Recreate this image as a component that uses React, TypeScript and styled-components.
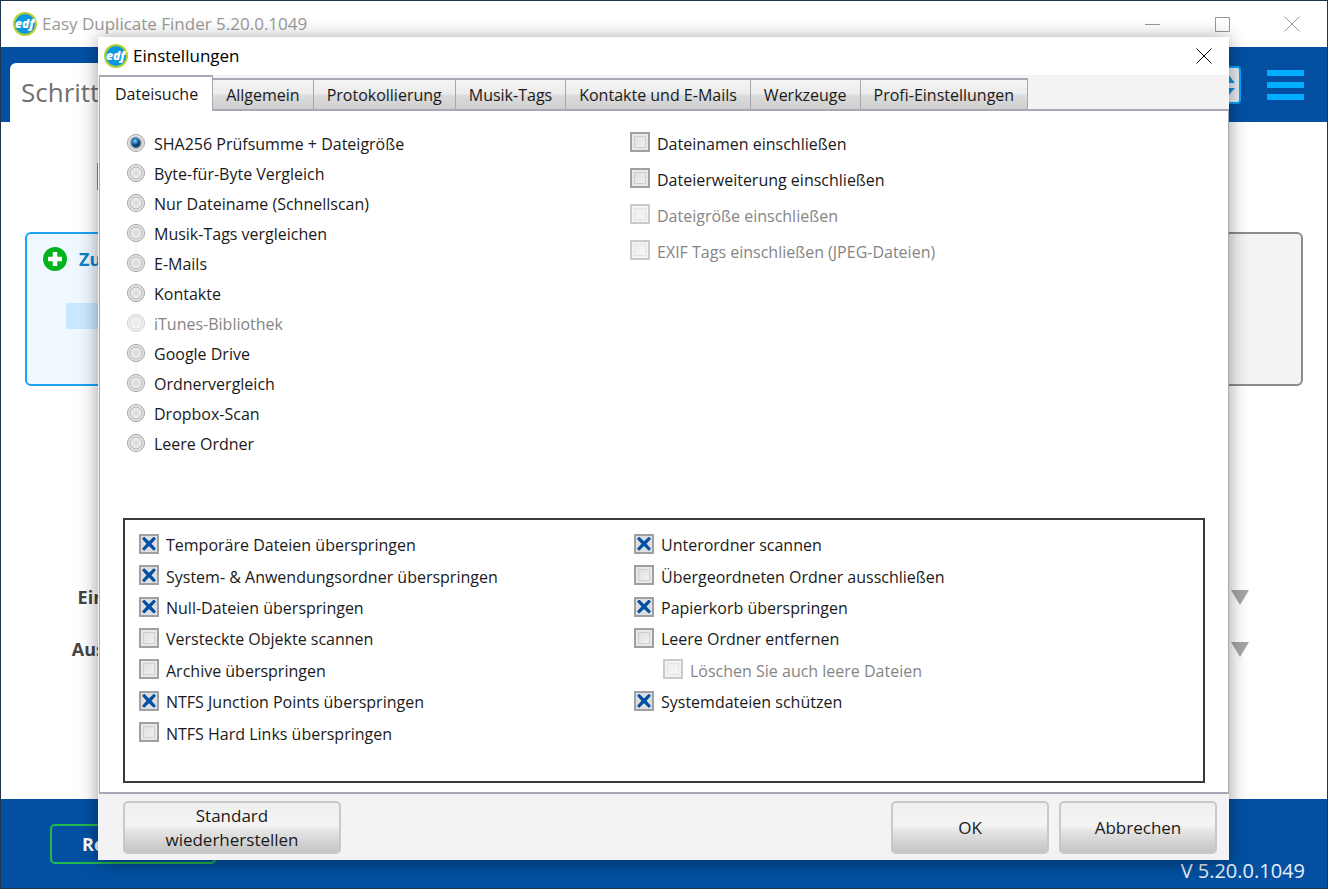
import React, { useState } from "react";
import styled, { createGlobalStyle } from "styled-components";

const GlobalStyle = createGlobalStyle`
  *, *::before, *::after { box-sizing: border-box; }
  body {
    margin: 0;
    font-family: "Open Sans", "Noto Sans", sans-serif;
    font-size: 16px;
    color: #1a1a1a;
  }
  button { font: inherit; color: inherit; cursor: pointer; }
  h1, h2, p { margin: 0; font-weight: 400; }
`;

const BLUE = "#0350a2";
const LINE = "#a6a9b2";

/* ---------- main window ---------- */

const Window = styled.div`
  position: relative;
  display: flex;
  flex-direction: column;
  min-height: 100vh;
  border: 1px solid #22344b;
  background: #fff;
`;

const TitleBar = styled.header`
  display: flex;
  align-items: center;
  height: 46px;
  padding-left: 12px;
  gap: 5px;
`;

const AppTitle = styled.h1`
  flex: 1;
  font-size: 17px;
  line-height: 24px;
  color: #999;
`;

const CaptionButtons = styled.div`
  display: flex;
  align-self: stretch;
`;

const CaptionButton = styled.button<{ $dark?: boolean }>`
  display: flex;
  align-items: center;
  justify-content: center;
  width: ${(p) => (p.$dark ? 50 : 70)}px;
  padding: 0;
  border: 0;
  background: none;
  color: ${(p) => (p.$dark ? "#000" : "#999")};
`;

const Banner = styled.div`
  display: flex;
  align-items: flex-end;
  height: 75px;
  padding: 0 23px 0 9px;
  background: ${BLUE};
`;

const StepTab = styled.div`
  flex: 1;
  max-width: 300px;
  height: 59px;
  padding: 11px;
  border-radius: 6px 6px 0 0;
  background: #fff;
  font-size: 26px;
  line-height: 36px;
  color: #707070;
`;

const BannerTools = styled.div`
  display: flex;
  align-items: center;
  gap: 26px;
  margin-left: auto;
  padding-bottom: 18px;
`;

const Stepper = styled.button`
  display: flex;
  align-items: center;
  justify-content: flex-end;
  width: 60px;
  height: 38px;
  padding: 0 3px;
  border: 2px solid #00a8ff;
  border-radius: 4px;
  background: #e8edf3;
`;

const MenuButton = styled.button`
  display: flex;
  padding: 0;
  border: 0;
  background: none;
`;

const Workspace = styled.main`
  flex: 1;
  display: flex;
  flex-direction: column;
  padding: 41px 24px 0;
`;

const Accent = styled.div`
  width: 160px;
  height: 27px;
  margin: 0 0 42px 72px;
  background: #3fa4f0;
`;

const Cards = styled.div`
  display: grid;
  grid-template-columns: 1fr 1fr;
  gap: 40px;
`;

const Card = styled.section<{ $active?: boolean }>`
  height: 154px;
  padding: 13px 16px;
  border: 2px solid ${(p) => (p.$active ? "#1ba4f7" : "#8c8c8c")};
  border-radius: 6px;
  background: ${(p) => (p.$active ? "#eff8ff" : "#f3f3f3")};
`;

const CardTitle = styled.h2`
  display: flex;
  align-items: center;
  gap: 12px;
  font-size: 18px;
  font-weight: 700;
  line-height: 24px;
  color: #0d7fc4;
`;

const CardBar = styled.div`
  height: 26px;
  margin: 32px 23px 0;
  background: #cce8ff;
`;

const FilterRows = styled.div`
  display: grid;
  gap: 28px;
  margin-top: 199px;
  padding: 0 54px 0 0;
`;

const FilterRow = styled.div`
  display: flex;
  align-items: center;
  justify-content: space-between;
  font-size: 18px;
  font-weight: 700;
  line-height: 24px;
  color: #444;
`;

const FilterLabel = styled.span`
  width: 80px;
  text-align: right;
`;

const BottomBar = styled.footer`
  display: flex;
  align-items: flex-start;
  justify-content: space-between;
  height: 89px;
  padding: 25px 22px 0 49px;
  background: ${BLUE};
  color: #fff;
`;

const RegisterButton = styled.button`
  width: 166px;
  height: 40px;
  padding: 0 30px;
  border: 2px solid #22b84a;
  border-radius: 5px;
  background: none;
  color: #fff;
  font-size: 18px;
  font-weight: 700;
  text-align: left;
`;

const Version = styled.p`
  padding-top: 35px;
  font-size: 20px;
  line-height: 24px;
  color: #e6eef6;
`;

/* ---------- settings dialog ---------- */

const Dialog = styled.div`
  position: absolute;
  inset: 36px 98px 28px 97px;
  display: flex;
  flex-direction: column;
  background: #f3f3f3;
  box-shadow: 0 2px 18px rgba(0, 0, 0, 0.4);
`;

const DialogTitleBar = styled.header`
  display: flex;
  align-items: center;
  height: 38px;
  padding-left: 6px;
  gap: 5px;
  background: #fff;
  color: #000;
`;

const DialogTitle = styled.h2`
  flex: 1;
  font-size: 17px;
  line-height: 24px;
`;

const TabStrip = styled.div`
  display: flex;
  align-items: flex-end;
  height: 36px;
  padding-left: 1px;
`;

const Tab = styled.button<{ $active?: boolean }>`
  position: relative;
  z-index: 1;
  height: ${(p) => (p.$active ? 36 : 33)}px;
  padding: ${(p) => (p.$active ? "0 14px 0 15px" : "0 13px")};
  border: solid ${LINE};
  border-width: ${(p) => (p.$active ? "2px 1px 0" : "2px 1px 2px 0")};
  background: ${(p) =>
    p.$active ? "#fff" : "linear-gradient(#f4f4f4 0%, #ececec 48%, #dcdcdc 52%, #cfcfcf 100%)"};
  white-space: nowrap;
`;

const TabPanel = styled.div`
  flex: 1;
  display: flex;
  flex-direction: column;
  margin: -2px 0 0 1px;
  padding: 13px 23px 9px;
  border: solid ${LINE};
  border-width: 2px 1px;
  background: #fff;
`;

const SearchOptions = styled.div`
  flex: 1;
  display: grid;
  grid-template-columns: 503px 1fr;
  align-items: start;
  padding-left: 4px;
`;

const OptionList = styled.div<{ $row: number; $top?: number }>`
  display: grid;
  grid-auto-rows: ${(p) => p.$row}px;
  padding-top: ${(p) => p.$top ?? 0}px;
`;

const ScanOptions = styled.div`
  display: grid;
  grid-template-columns: 495px 1fr;
  height: 265px;
  padding: 8px 14px 33px;
  border: 2px solid #3a3a3a;
`;

const ScanColumn = styled.div`
  display: grid;
  grid-template-rows: repeat(7, 1fr);
`;

const Option = styled.label<{ $disabled?: boolean; $indent?: boolean }>`
  display: flex;
  align-items: center;
  gap: 7px;
  margin-left: ${(p) => (p.$indent ? 29 : 0)}px;
  color: ${(p) => (p.$disabled ? "#858585" : "inherit")};
  white-space: nowrap;
`;

const Check = styled.input.attrs({ type: "checkbox" })`
  appearance: none;
  display: grid;
  place-items: center;
  flex: none;
  width: 20px;
  height: 20px;
  margin: 0;
  border: 2px solid #a0a0a0;
  background: linear-gradient(135deg, #dadada, #f6f6f6);
  box-shadow: inset 0 0 0 2px #e8e8e8, inset 0 0 0 3px #cfcfcf;

  &:checked {
    background: #dcdee1;
    box-shadow: none;
  }
  &:checked::before {
    content: "";
    width: 14px;
    height: 14px;
    background: ${BLUE};
    clip-path: polygon(
      0 14%, 16% 0, 50% 33%, 84% 0, 100% 14%, 68% 50%,
      100% 86%, 84% 100%, 50% 67%, 16% 100%, 0 86%, 32% 50%
    );
  }
  &:disabled { opacity: 0.55; }
`;

const Radio = styled.input.attrs({ type: "radio" })`
  appearance: none;
  flex: none;
  width: 18px;
  height: 18px;
  margin: 0 2px 0 0;
  border: 1px solid #a0a0a0;
  border-radius: 50%;
  background: radial-gradient(circle at 8px 8px, #d2d8dc 0, #ececec 5px, #b4b4b4 6px, #ececec 7px);

  &:checked {
    background:
      radial-gradient(circle at 7px 6px, #8fd0f5 0, #1a6cb4 3px, rgba(26, 108, 180, 0) 4px),
      radial-gradient(circle at 8px 8px, #0b3f75 0, #0b3f75 4px, #a9b4bf 5px, #b4b4b4 6px, #ececec 7px);
  }
  &:disabled { opacity: 0.5; }
`;

const OptionText = styled.span`
  padding-top: 3px;
  line-height: 22px;

  ${Radio} + & { padding-top: 1px; }
`;

const DialogFooter = styled.footer`
  display: flex;
  gap: 10px;
  height: 66px;
  padding: 7px 12px 6px 25px;
`;

const PushButton = styled.button<{ $width: number; $first?: boolean }>`
  width: ${(p) => p.$width}px;
  margin-right: ${(p) => (p.$first ? "auto" : "0")};
  padding: 0 30px;
  border: 2px solid #c8c8c8;
  border-radius: 5px;
  background: linear-gradient(#efefef 0%, #f4f4f4 45%, #e4e4e4 58%, #c4c4c4 100%);
  font-size: 17px;
  line-height: 24px;
`;

/* ---------- drawings ---------- */

const Logo = () => (
  <svg width="24" height="24" viewBox="0 0 24 24" aria-hidden="true">
    <circle cx="12" cy="12" r="12" fill="#b4cf34" />
    <circle cx="12" cy="12" r="10" fill="#0a97df" />
    <text
      x="11.5"
      y="16"
      textAnchor="middle"
      fontFamily="Open Sans, sans-serif"
      fontSize="12"
      fontWeight="800"
      fontStyle="italic"
      fill="#fff"
    >
      edf
    </text>
  </svg>
);

const CloseIcon = () => (
  <svg width="16" height="16" viewBox="0 0 16 16" stroke="currentColor" aria-hidden="true">
    <path d="M.5.5l15 15M15.5.5l-15 15" />
  </svg>
);

const MinimizeIcon = () => (
  <svg width="15" height="15" viewBox="0 0 15 15" stroke="currentColor" aria-hidden="true">
    <path d="M0 7.5h15" />
  </svg>
);

const MaximizeIcon = () => (
  <svg width="15" height="15" viewBox="0 0 15 15" fill="none" stroke="currentColor" aria-hidden="true">
    <path d="M.5.5h14v14H.5z" />
  </svg>
);

const StepperArrows = () => (
  <svg width="16" height="22" viewBox="0 0 16 22" fill="#0a97e8" aria-hidden="true">
    <path d="M8 0l7 9H1zM8 22l7-8H1z" />
  </svg>
);

const MenuIcon = () => (
  <svg width="37" height="30" viewBox="0 0 37 30" fill="#00aeff" aria-hidden="true">
    <path d="M0 0h37v6H0zM0 12h37v6H0zM0 24h37v6H0z" />
  </svg>
);

const PlusIcon = () => (
  <svg width="24" height="24" viewBox="0 0 24 24" aria-hidden="true">
    <circle cx="12" cy="12" r="12" fill="#00b51c" />
    <path d="M12 5v14M5 12h14" stroke="#fff" strokeWidth="4.5" />
  </svg>
);

const DropArrow = () => (
  <svg width="18" height="15" viewBox="0 0 18 15" fill="#a6a6a6" aria-hidden="true">
    <path d="M0 0h18L9 15z" />
  </svg>
);

/* ---------- data ---------- */

type Item = { label: string; checked?: boolean; disabled?: boolean; indent?: boolean };

const TABS = [
  "Dateisuche",
  "Allgemein",
  "Protokollierung",
  "Musik-Tags",
  "Kontakte und E-Mails",
  "Werkzeuge",
  "Profi-Einstellungen",
];

const MODES: Item[] = [
  { label: "SHA256 Prüfsumme + Dateigröße" },
  { label: "Byte-für-Byte Vergleich" },
  { label: "Nur Dateiname (Schnellscan)" },
  { label: "Musik-Tags vergleichen" },
  { label: "E-Mails" },
  { label: "Kontakte" },
  { label: "iTunes-Bibliothek", disabled: true },
  { label: "Google Drive" },
  { label: "Ordnervergleich" },
  { label: "Dropbox-Scan" },
  { label: "Leere Ordner" },
];

const INCLUDES: Item[] = [
  { label: "Dateinamen einschließen" },
  { label: "Dateierweiterung einschließen" },
  { label: "Dateigröße einschließen", disabled: true },
  { label: "EXIF Tags einschließen (JPEG-Dateien)", disabled: true },
];

const SCAN_LEFT: Item[] = [
  { label: "Temporäre Dateien überspringen", checked: true },
  { label: "System- & Anwendungsordner überspringen", checked: true },
  { label: "Null-Dateien überspringen", checked: true },
  { label: "Versteckte Objekte scannen" },
  { label: "Archive überspringen" },
  { label: "NTFS Junction Points überspringen", checked: true },
  { label: "NTFS Hard Links überspringen" },
];

const SCAN_RIGHT: Item[] = [
  { label: "Unterordner scannen", checked: true },
  { label: "Übergeordneten Ordner ausschließen" },
  { label: "Papierkorb überspringen", checked: true },
  { label: "Leere Ordner entfernen" },
  { label: "Löschen Sie auch leere Dateien", disabled: true, indent: true },
  { label: "Systemdateien schützen", checked: true },
];

const CheckOption = ({ item }: { item: Item }) => (
  <Option $disabled={item.disabled} $indent={item.indent}>
    <Check defaultChecked={item.checked} disabled={item.disabled} />
    <OptionText>{item.label}</OptionText>
  </Option>
);

function SettingsDialog() {
  const [mode, setMode] = useState(MODES[0].label);
  const [tab, setTab] = useState(TABS[0]);

  return (
    <Dialog role="dialog" aria-labelledby="settings-title">
      <DialogTitleBar>
        <Logo />
        <DialogTitle id="settings-title">Einstellungen</DialogTitle>
        <CaptionButton $dark aria-label="Schließen">
          <CloseIcon />
        </CaptionButton>
      </DialogTitleBar>
      <TabStrip role="tablist">
        {TABS.map((name) => (
          <Tab
            key={name}
            role="tab"
            aria-selected={name === tab}
            $active={name === tab}
            onClick={() => setTab(name)}
          >
            {name}
          </Tab>
        ))}
      </TabStrip>
      <TabPanel role="tabpanel">
        <SearchOptions>
          <OptionList $row={30} $top={4}>
            {MODES.map((item) => (
              <Option key={item.label} $disabled={item.disabled}>
                <Radio
                  name="mode"
                  checked={mode === item.label}
                  disabled={item.disabled}
                  onChange={() => setMode(item.label)}
                />
                <OptionText>{item.label}</OptionText>
              </Option>
            ))}
          </OptionList>
          <OptionList $row={36}>
            {INCLUDES.map((item) => (
              <CheckOption key={item.label} item={item} />
            ))}
          </OptionList>
        </SearchOptions>
        <ScanOptions>
          <ScanColumn>
            {SCAN_LEFT.map((item) => (
              <CheckOption key={item.label} item={item} />
            ))}
          </ScanColumn>
          <ScanColumn>
            {SCAN_RIGHT.map((item) => (
              <CheckOption key={item.label} item={item} />
            ))}
          </ScanColumn>
        </ScanOptions>
      </TabPanel>
      <DialogFooter>
        <PushButton $width={218} $first>
          Standard wiederherstellen
        </PushButton>
        <PushButton $width={158}>OK</PushButton>
        <PushButton $width={158}>Abbrechen</PushButton>
      </DialogFooter>
    </Dialog>
  );
}

export default function App() {
  return (
    <>
      <GlobalStyle />
      <Window>
        <TitleBar>
          <Logo />
          <AppTitle>Easy Duplicate Finder 5.20.0.1049</AppTitle>
          <CaptionButtons>
            <CaptionButton aria-label="Minimieren">
              <MinimizeIcon />
            </CaptionButton>
            <CaptionButton aria-label="Maximieren">
              <MaximizeIcon />
            </CaptionButton>
            <CaptionButton aria-label="Beenden">
              <CloseIcon />
            </CaptionButton>
          </CaptionButtons>
        </TitleBar>
        <Banner>
          <StepTab>Schritt</StepTab>
          <BannerTools>
            <Stepper aria-label="Auswahl">
              <StepperArrows />
            </Stepper>
            <MenuButton aria-label="Menü">
              <MenuIcon />
            </MenuButton>
          </BannerTools>
        </Banner>
        <Workspace>
          <Accent />
          <Cards>
            <Card $active>
              <CardTitle>
                <PlusIcon />
                Zu
              </CardTitle>
              <CardBar />
            </Card>
            <Card />
          </Cards>
          <FilterRows>
            <FilterRow>
              <FilterLabel>Ein</FilterLabel>
              <DropArrow />
            </FilterRow>
            <FilterRow>
              <FilterLabel>Aus</FilterLabel>
              <DropArrow />
            </FilterRow>
          </FilterRows>
        </Workspace>
        <BottomBar>
          <RegisterButton>Re</RegisterButton>
          <Version>V 5.20.0.1049</Version>
        </BottomBar>
        <SettingsDialog />
      </Window>
    </>
  );
}
